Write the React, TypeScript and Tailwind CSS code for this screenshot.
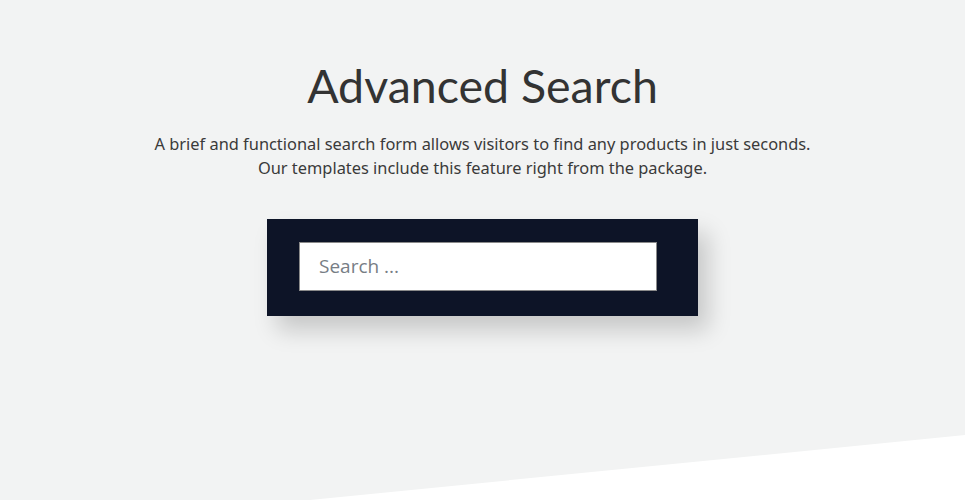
import React from "react";

export default function App() {
  return (
    <div className="relative w-[965px] h-[500px] overflow-hidden bg-[#f2f3f3]">
      <div
        className="absolute inset-0 bg-white"
        style={{ clipPath: "polygon(965px 435px, 965px 500px, 310px 500px)" }}
      />
      <div className="relative flex flex-col items-center pt-[57px]">
        <h1 className="text-[46.5px] leading-[57px] text-[#333333] font-['Lato',sans-serif] font-normal">
          Advanced Search
        </h1>
        <p className="mt-[18px] text-center text-[16.4px] leading-[24px] text-[#3a3a3a] font-['Noto_Sans',sans-serif]">
          A brief and functional search form allows visitors to find any products in just seconds.
          <br />
          Our templates include this feature right from the package.
        </p>
        <div className="mt-[39px] w-[431px] h-[97px] bg-[#0d1427] shadow-[10px_14px_22px_rgba(0,0,0,0.18)] pl-[32px] pt-[23px]">
          <div className="w-[358px] h-[49px] bg-white border border-[#8a8a8a] flex items-center pl-[19px]">
            <span className="text-[19px] text-[#777d85] font-['Open_Sans',sans-serif]">Search ...</span>
          </div>
        </div>
      </div>
    </div>
  );
}
